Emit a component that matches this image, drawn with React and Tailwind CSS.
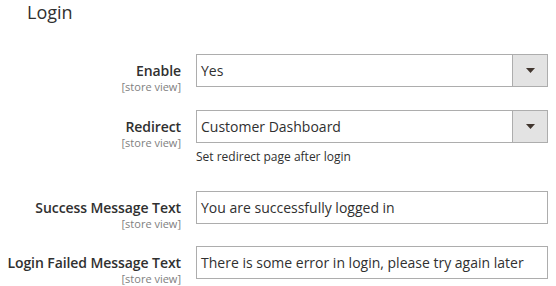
import React from 'react';

const Label = ({ text }) => (
  <div className="w-[181px] shrink-0 pt-[8px] text-right">
    <div className="text-[14px] leading-[18px] font-semibold tracking-[-0.08px] text-[#303030]">{text}</div>
    <div className="text-[11px] leading-[14px] text-[#808080]">[store view]</div>
  </div>
);

const Select = ({ value }) => (
  <div className="flex h-[33px] w-full border border-[#adadad] bg-white">
    <div className="flex flex-1 items-center pl-[4px] text-[14px] text-[#303030]">{value}</div>
    <div className="flex w-[35px] items-center justify-center border-l border-[#adadad] bg-[#e3e3e3]">
      <svg width="9" height="5" viewBox="0 0 9 5">
        <path d="M0 0 H9 L4.5 5 Z" fill="#41362f" />
      </svg>
    </div>
  </div>
);

const Input = ({ value }) => (
  <div className="flex h-[33px] w-full items-center border border-[#adadad] bg-white pl-[4px] text-[14px] text-[#303030]">
    {value}
  </div>
);

export default function App() {
  return (
    <div className="h-[286px] w-[556px] overflow-hidden bg-white font-['Open_Sans',sans-serif]">
      <h2 className="pl-[27px] text-[18px] leading-[24px] font-normal text-[#303030]">Login</h2>

      <div className="mt-[30px] flex flex-col">
        <div className="mb-[16px] flex items-start gap-[15px]">
          <Label text="Enable" />
          <div className="w-[352px]">
            <Select value="Yes" />
          </div>
        </div>

        <div className="mb-[26px] flex items-start gap-[15px]">
          <Label text="Redirect" />
          <div className="w-[352px]">
            <Select value="Customer Dashboard" />
            <p className="mt-[6px] text-[12px] leading-[16px] text-[#303030]">Set redirect page after login</p>
          </div>
        </div>

        <div className="mb-[15px] flex items-start gap-[15px]">
          <Label text="Success Message Text" />
          <div className="w-[352px]">
            <Input value="You are successfully logged in" />
          </div>
        </div>

        <div className="flex items-start gap-[15px]">
          <Label text="Login Failed Message Text" />
          <div className="w-[352px]">
            <Input value="There is some error in login, please try again later" />
          </div>
        </div>
      </div>
    </div>
  );
}
